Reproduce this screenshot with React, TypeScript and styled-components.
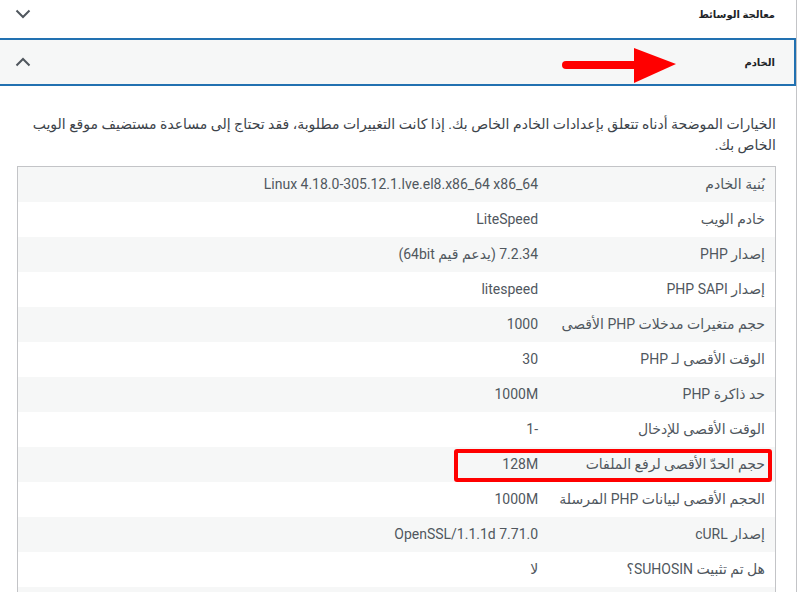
import { FC } from 'react';
import { createGlobalStyle, styled } from 'styled-components';

type InfoRow = {
  label: string;
  value: string;
  marked?: boolean;
};

const rows: InfoRow[] = [
  { label: 'بُنية الخادم', value: 'Linux 4.18.0-305.12.1.lve.el8.x86_64 x86_64' },
  { label: 'خادم الويب', value: 'LiteSpeed' },
  { label: 'إصدار PHP', value: '7.2.34 (يدعم قيم 64bit)' },
  { label: 'إصدار PHP SAPI', value: 'litespeed' },
  { label: 'حجم متغيرات مدخلات PHP الأقصى', value: '1000' },
  { label: 'الوقت الأقصى لـ PHP', value: '30' },
  { label: 'حد ذاكرة PHP', value: '1000M' },
  { label: 'الوقت الأقصى للإدخال', value: '-1' },
  { label: 'حجم الحدّ الأقصى لرفع الملفات', value: '128M', marked: true },
  { label: 'الحجم الأقصى لبيانات PHP المرسلة', value: '1000M' },
  { label: 'إصدار cURL', value: '7.71.0 OpenSSL/1.1.1d' },
  { label: 'هل تم تثبيت SUHOSIN؟', value: 'لا' },
  { label: 'هل مكتبة Imagick متوفرة؟', value: 'لا' },
];

const GlobalStyle = createGlobalStyle`
  html, body {
    margin: 0;
    background: #fff;
  }
  body {
    font-family: Roboto, "DejaVu Sans", sans-serif;
    color: #3c434a;
    overflow: hidden;
  }
`;

const Page = styled.div.attrs({ dir: 'rtl' })`
  width: 798px;
  height: 592px;
  overflow: hidden;
`;

// the screenshot crops the left edge of the box by a few pixels
const Accordion = styled.div`
  width: 800px;
  margin: -10px 1px 0 0;
  border-right: 1px solid #c3c4c7;
  box-sizing: border-box;
`;

const Heading = styled.div<{ $open?: boolean }>`
  position: relative;
  display: flex;
  align-items: center;
  justify-content: space-between;
  height: 48px;
  padding: 0 21px 0 18px;
  box-sizing: border-box;
  background: ${(p) => (p.$open ? '#f6f7f7' : '#fff')};
  box-shadow: ${(p) => (p.$open ? 'inset 0 0 0 2px #2271b1' : 'none')};
  font-size: 10px;
  font-weight: 700;
  color: #1d2327;
`;

const Chevron = styled.svg`
  width: 16px;
  height: 10px;
  fill: none;
  stroke: #50575e;
  stroke-width: 2;
`;

const Pointer = styled.svg`
  position: absolute;
  left: 564px;
  top: 6px;
  width: 118px;
  height: 42px;
`;

const Panel = styled.div`
  padding: 0 20px;
`;

const Intro = styled.p`
  margin: 28px 0 10px;
  font-size: 14px;
  line-height: 21px;
  color: #3c434a;
`;

const Table = styled.table`
  width: 100%;
  border-collapse: collapse;
  border: 1px solid #c3c4c7;
  font-size: 14px;
  color: #50575e;
`;

const Row = styled.tr<{ $shaded: boolean }>`
  background: ${(p) => (p.$shaded ? '#f6f7f7' : '#fff')};
`;

const Cell = styled.td`
  height: 35px;
  padding: 0 10px;
  vertical-align: middle;
  text-align: right;
  box-sizing: border-box;
  &:first-child {
    position: relative;
    width: 30%;
  }
`;

const Marker = styled.span`
  position: absolute;
  top: 2px;
  bottom: 0;
  right: 3px;
  left: -94px;
  border: 4px solid #ff0000;
  border-radius: 3px;
  pointer-events: none;
`;

const Arrow: FC = () => (
  <Pointer viewBox="0 0 118 42">
    <line x1="5" y1="21" x2="76" y2="21" stroke="#ff0000" strokeWidth="8" strokeLinecap="round" />
    <polygon points="73,4 115,20 73,39" fill="#ff0000" />
  </Pointer>
);

const SectionHeading: FC<{ title: string; open?: boolean; withArrow?: boolean }> = ({
  title,
  open,
  withArrow,
}) => (
  <Heading $open={open}>
    <span>{title}</span>
    {withArrow && <Arrow />}
    <Chevron viewBox="0 0 16 10">
      {open ? <polyline points="1.5,8.5 8,2 14.5,8.5" /> : <polyline points="1.5,1.5 8,8 14.5,1.5" />}
    </Chevron>
  </Heading>
);

export default function App() {
  return (
    <Page>
      <GlobalStyle />
      <Accordion>
        <SectionHeading title="معالجة الوسائط" />
        <SectionHeading title="الخادم" open withArrow />
        <Panel>
          <Intro>
            الخيارات الموضحة أدناه تتعلق بإعدادات الخادم الخاص بك. إذا كانت التغييرات مطلوبة، فقد تحتاج
            إلى مساعدة مستضيف موقع الويب الخاص بك.
          </Intro>
          <Table>
            <tbody>
              {rows.map((row, i) => (
                <Row key={row.label} $shaded={i % 2 === 0}>
                  <Cell>
                    {row.label}
                    {row.marked && <Marker />}
                  </Cell>
                  <Cell>{row.value}</Cell>
                </Row>
              ))}
            </tbody>
          </Table>
        </Panel>
      </Accordion>
    </Page>
  );
}
